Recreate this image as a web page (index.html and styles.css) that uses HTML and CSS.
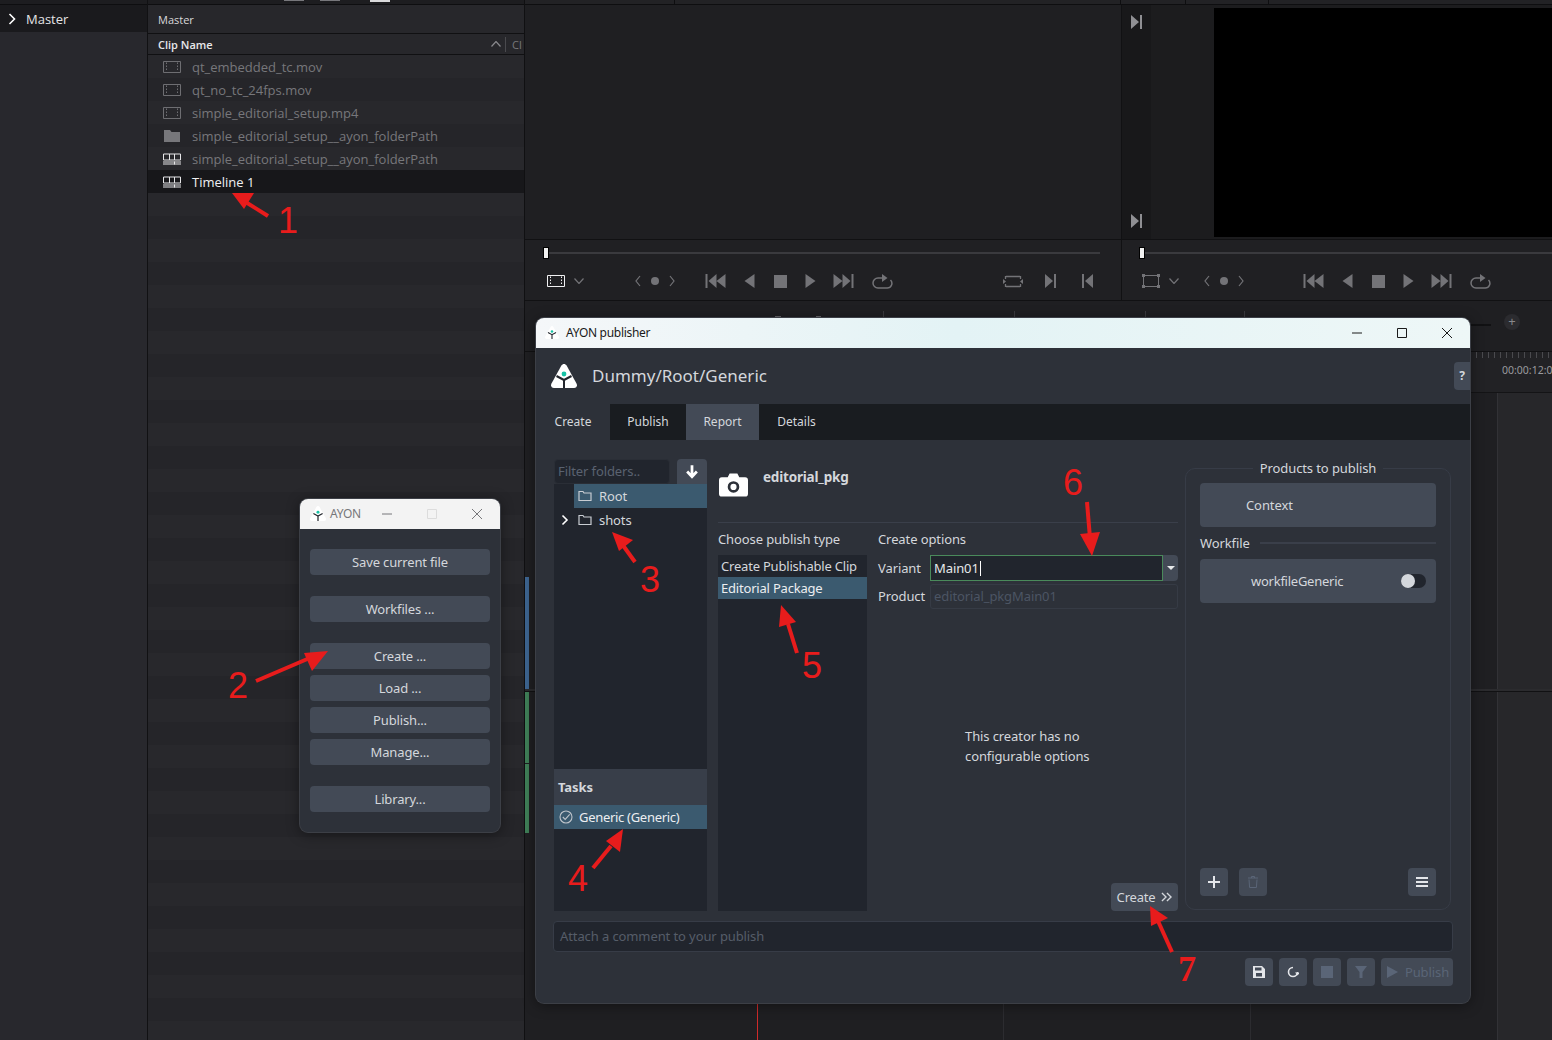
FILE: index.html
```html
<!DOCTYPE html>
<html lang="en">
    <head>
        <meta charset="UTF-8" />
        <title>AYON publisher</title>
        <link rel="stylesheet" href="styles.css">
    </head>
    <body>
        <!-- shared icons -->
        <svg class="sprite" aria-hidden="true">
            <symbol id="i-film" viewBox="0 0 18 12"><path d="M.5.500h17v11H.5z" fill="none" stroke="currentColor"/><path d="M3.500 1.500v9 M14.500 1.500v9" fill="none" stroke="currentColor" stroke-dasharray="1.500 1.500"/></symbol>
            <symbol id="i-tl" viewBox="0 0 18 11"><path d="M.5.500h17v6H.5z M6.500.5v6 M11.500.5v6 M0 8.500h18 M0 10.500h18 M11.500 8v3" fill="none" stroke="currentColor"/></symbol>
            <symbol id="i-folder" viewBox="0 0 14 12"><path d="M1 1.500h4l1 1.500h7v7.500H1z" fill="none" stroke="currentColor" stroke-width="1.200"/></symbol>
            <symbol id="i-first" viewBox="0 0 20 14"><path d="M0 0h2v14H0zM11 0v14L3 7zM20 0v14l-9-7z" fill="currentColor"/></symbol>
            <symbol id="i-last" viewBox="0 0 20 14"><path d="M20 0h-2v14h2zM9 0v14l8-7zM0 0v14l9-7z" fill="currentColor"/></symbol>
            <symbol id="i-back" viewBox="0 0 10 14"><path d="M10 0v14L0 7z" fill="currentColor"/></symbol>
            <symbol id="i-play" viewBox="0 0 10 14"><path d="M0 0v14l10-7z" fill="currentColor"/></symbol>
            <symbol id="i-stop" viewBox="0 0 13 13"><path d="M0 0h13v13H0z" fill="currentColor"/></symbol>
            <symbol id="i-loop" viewBox="0 0 21 16"><path d="M11 5H6a4.700 4.700 0 0 0 0 10h9a4.700 4.700 0 0 0 3.500-8" fill="none" stroke="currentColor" stroke-width="1.500"/><path d="M10 1l5.500 4-5.500 4z" fill="currentColor"/></symbol>
            <symbol id="i-mark-in" viewBox="0 0 11 14"><path d="M0 0h2v14H0zM11 0v14L3 7z" fill="currentColor"/></symbol>
            <symbol id="i-mark-out" viewBox="0 0 11 14"><path d="M11 0H9v14h2zM0 0v14l8-7z" fill="currentColor"/></symbol>
            <symbol id="i-nav" viewBox="0 0 40 12"><path d="M5 1 1 6l4 5M35 1l4 5-4 5" fill="none" stroke="currentColor" stroke-width="1.200"/><circle cx="20" cy="6" r="4" fill="currentColor"/></symbol>
            <symbol id="i-chev" viewBox="0 0 10 6"><path d="M.5.500 5 5.500 9.500.5" fill="none" stroke="currentColor" stroke-width="1.200"/></symbol>
            <symbol id="i-logo" viewBox="0 0 26 24"><path d="M13 0c1 0 2 .6 2.600 1.600L25.500 19.500c1.200 2.200 0 4.500-2.500 4.500H3C.5 24-.7 21.700.5 19.500L10.400 1.600C11 .6 12 0 13 0z" fill="#fff"/><path d="M5.500 12l7.500 4 7.500-4M13 16v8" fill="none" stroke="#23262d" stroke-width="2"/><circle cx="13" cy="10" r="2.400" fill="#17c3a6"/></symbol>
        </svg>

        <div class="app">
            <aside class="bins">
                <div class="topstrip"></div>
                <div class="binrow">
                    <svg class="binchev" viewBox="0 0 8 12"><path d="M1.500 1 6.500 6l-5 5" fill="none" stroke="#fff" stroke-width="1.600"/></svg>
                    Master
                </div>
            </aside>

            <section class="pool">
                <div class="topstrip poolstrip"></div>
                <div class="poolhead">Master</div>
                <div class="colhead">
                    <span class="colname">Clip Name</span>
                    <svg class="colsort" viewBox="0 0 10 6"><path d="M.5 5.500 5 .5l4.500 5" fill="none" stroke="#8a8a8e" stroke-width="1.200"/></svg>
                    <span class="colnext">Cl</span>
                </div>
                <div class="clips">
                    <div class="clip"><svg class="clipico dim"><use href="#i-film"/></svg>qt_embedded_tc.mov</div>
                    <div class="clip"><svg class="clipico dim"><use href="#i-film"/></svg>qt_no_tc_24fps.mov</div>
                    <div class="clip"><svg class="clipico dim"><use href="#i-film"/></svg>simple_editorial_setup.mp4</div>
                    <div class="clip"><svg class="clipico folderfill" viewBox="0 0 16 12"><path d="M0 0h6l1.500 2H16v10H0z" fill="currentColor"/></svg>simple_editorial_setup__ayon_folderPath</div>
                    <div class="clip"><svg class="clipico"><use href="#i-tl"/></svg>simple_editorial_setup__ayon_folderPath</div>
                    <div class="clip on"><svg class="clipico"><use href="#i-tl"/></svg>Timeline 1</div>
                </div>
            </section>

            <main class="stage">
                <div class="topstrip stagestrip"></div>
                <div class="viewers">
                    <div class="viewer left">
                        <div class="pic"></div>
                        <div class="scrub"><i class="knob"></i><i class="track"></i></div>
                        <div class="ctrl">
                            <svg class="ic film w"><use href="#i-film"/></svg>
                            <svg class="ic chev"><use href="#i-chev"/></svg>
                            <svg class="ic nav"><use href="#i-nav"/></svg>
                            <svg class="ic first t1"><use href="#i-first"/></svg>
                            <svg class="ic one"><use href="#i-back"/></svg>
                            <svg class="ic stop"><use href="#i-stop"/></svg>
                            <svg class="ic one"><use href="#i-play"/></svg>
                            <svg class="ic first"><use href="#i-last"/></svg>
                            <svg class="ic loop"><use href="#i-loop"/></svg>
                            <svg class="ic match" viewBox="0 0 20 13"><path d="M3 1.500h14M3 11.500h14M2.500 1v3M17.500 1v3M2.500 9v3M17.500 9v3" fill="none" stroke="currentColor" stroke-width="1.300"/><path d="M0 4l3 2.500L0 9zM20 4l-3 2.500L20 9z" fill="currentColor"/></svg>
                            <svg class="ic mark m1"><use href="#i-mark-out"/></svg>
                            <svg class="ic mark m2"><use href="#i-mark-in"/></svg>
                        </div>
                    </div>
                    <div class="viewer right">
                        <div class="pic">
                            <div class="marks">
                                <svg class="ic mark"><use href="#i-mark-out"/></svg>
                                <svg class="ic mark"><use href="#i-mark-out"/></svg>
                            </div>
                            <div class="black"></div>
                        </div>
                        <div class="scrub"><i class="knob"></i><i class="track"></i></div>
                        <div class="ctrl">
                            <svg class="ic frame" viewBox="0 0 18 14"><path d="M1.500 1.500h15v11h-15z" fill="none" stroke="currentColor"/><path d="M0 0h3v3H0zM15 0h3v3h-3zM0 11h3v3H0zM15 11h3v3h-3z" fill="currentColor"/></svg>
                            <svg class="ic chev"><use href="#i-chev"/></svg>
                            <svg class="ic nav r1"><use href="#i-nav"/></svg>
                            <svg class="ic first r2"><use href="#i-first"/></svg>
                            <svg class="ic one"><use href="#i-back"/></svg>
                            <svg class="ic stop"><use href="#i-stop"/></svg>
                            <svg class="ic one"><use href="#i-play"/></svg>
                            <svg class="ic first"><use href="#i-last"/></svg>
                            <svg class="ic loop"><use href="#i-loop"/></svg>
                        </div>
                    </div>
                </div>
                <div class="tools"></div>
                <div class="timeline">
                    <div class="tracks"></div>
                    <div class="ruler"></div>
                    <span class="tc">00:00:12:0</span>
                    <i class="zoomplus">+</i>
                    <i class="slider"></i>
                    <i class="track-b"></i>
                    <i class="track-g g1"></i>
                    <i class="track-g g2"></i>
                    <i class="split"></i>
                    <i class="vline v1"></i>
                    <i class="vline v3"></i>
                    <i class="playhead"></i>
                </div>
            </main>
        </div>

        <!-- 작은 AYON 창 -->
        <div class="win tray">
            <div class="titlebar gray">
                <svg class="winlogo"><use href="#i-logo"/></svg>
                <span class="wintitle">AYON</span>
                <span class="winbtns">
                    <svg viewBox="0 0 10 10"><path d="M0 5h10" stroke="currentColor"/></svg>
                    <svg class="off" viewBox="0 0 10 10"><path d="M.5.500h9v9h-9z" fill="none" stroke="currentColor"/></svg>
                    <svg viewBox="0 0 10 10"><path d="M0 0l10 10M10 0 0 10" stroke="currentColor"/></svg>
                </span>
            </div>
            <div class="traybody">
                <button class="tbtn gap">Save current file</button>
                <button class="tbtn gap">Workfiles ...</button>
                <button class="tbtn">Create ...</button>
                <button class="tbtn">Load ...</button>
                <button class="tbtn">Publish...</button>
                <button class="tbtn gap">Manage...</button>
                <button class="tbtn">Library...</button>
            </div>
        </div>

        <!-- publisher 창 -->
        <div class="win pub">
            <div class="titlebar">
                <svg class="winlogo small"><use href="#i-logo"/></svg>
                <span class="wintitle">AYON publisher</span>
                <span class="winbtns">
                    <svg viewBox="0 0 10 10"><path d="M0 5h10" stroke="currentColor"/></svg>
                    <svg viewBox="0 0 10 10"><path d="M.5.500h9v9h-9z" fill="none" stroke="currentColor"/></svg>
                    <svg viewBox="0 0 10 10"><path d="M0 0l10 10M10 0 0 10" stroke="currentColor"/></svg>
                </span>
            </div>
            <div class="pubhead">
                <svg class="publogo"><use href="#i-logo"/></svg>
                <span class="ctxpath">Dummy/Root/Generic</span>
                <span class="help">?</span>
            </div>
            <div class="tabs">
                <span class="tab sel">Create</span>
                <span class="tab t-pub">Publish</span>
                <span class="tab hl">Report</span>
                <span class="tab t-det">Details</span>
            </div>
            <div class="pubbody">
                <div class="colfolders">
                    <div class="filter">
                        <span class="filterin">Filter folders..</span>
                        <span class="sbtn arrowbtn"><svg viewBox="0 0 12 13"><path d="M6 1v9M1.800 6.500 6 11l4.200-4.500" fill="none" stroke="#fff" stroke-width="2.400"/></svg></span>
                    </div>
                    <div class="tree">
                        <div class="node on"><svg class="fold"><use href="#i-folder"/></svg>Root</div>
                        <div class="node kid">
                            <svg class="nodechev" viewBox="0 0 8 12"><path d="M1.500 1.500 6 6l-4.500 4.500" fill="none" stroke="#fff" stroke-width="1.600"/></svg>
                            <svg class="fold"><use href="#i-folder"/></svg>shots
                        </div>
                    </div>
                    <div class="taskhead">Tasks</div>
                    <div class="tasks">
                        <div class="task"><svg class="taskico" viewBox="0 0 14 14"><circle cx="7" cy="7" r="6" fill="none" stroke="currentColor" stroke-width="1.100"/><path d="M3.800 7l2.400 2.400 4.500-5" fill="none" stroke="currentColor" stroke-width="1.100"/></svg>Generic (Generic)</div>
                    </div>
                </div>

                <div class="colcreate">
                    <div class="crhead">
                        <svg class="cam" viewBox="0 0 30 24"><path fill-rule="evenodd" d="M3 4h6l2-4h8l2 4h6a3 3 0 0 1 3 3v14a3 3 0 0 1-3 3H3a3 3 0 0 1-3-3V7a3 3 0 0 1 3-3zm12 4a6 6 0 1 0 0 12 6 6 0 0 0 0-12zm0 2.800a3.200 3.200 0 1 1 0 6.400 3.200 3.200 0 0 1 0-6.400z" fill="#fff"/></svg>
                        <b class="crname">editorial_pkg</b>
                    </div>
                    <div class="crcols">
                        <div class="types">
                            <div class="lbl">Choose publish type</div>
                            <div class="typelist">
                                <div class="type">Create Publishable Clip</div>
                                <div class="type on">Editorial Package</div>
                            </div>
                        </div>
                        <div class="opts">
                            <div class="lbl">Create options</div>
                            <div class="field">
                                <span class="flabel">Variant</span>
                                <span class="varbox"><span class="varin">Main01<i class="caret"></i></span><span class="vardrop"><i></i></span></span>
                            </div>
                            <div class="field">
                                <span class="flabel">Product</span>
                                <span class="prodbox">editorial_pkgMain01</span>
                            </div>
                            <div class="nocfg">This creator has no<br>configurable options</div>
                            <div class="crfoot">
                                <span class="crbtn">Create
                                    <svg viewBox="0 0 12 11"><path d="M1 1l4.500 4.500L1 10M6.500 1 11 5.500 6.500 10" fill="none" stroke="currentColor" stroke-width="1.500"/></svg>
                                </span>
                            </div>
                        </div>
                    </div>
                </div>

                <div class="colprod">
                    <div class="prodtitle"><span>Products to publish</span></div>
                    <div class="card ctxcard">Context</div>
                    <div class="group"><span>Workfile</span><i></i></div>
                    <div class="card wfcard"><span>workfileGeneric</span><i class="toggle"></i></div>
                    <div class="prodfoot">
                        <span class="sbtn"><svg viewBox="0 0 12 12"><path d="M6 0v12M0 6h12" stroke="#e4e6ea" stroke-width="2"/></svg></span>
                        <span class="sbtn"><svg viewBox="0 0 10 12"><path d="M0 2h10M3.500 2V.5h3V2M1 3.500l.6 8h6.800l.6-8" fill="none" stroke="#5a6577"/></svg></span>
                        <span class="sbtn last"><svg viewBox="0 0 12 11"><path d="M0 1.500h12M0 5.500h12M0 9.500h12" stroke="#e4e6ea" stroke-width="2.200"/></svg></span>
                    </div>
                </div>
            </div>
            <div class="comment">Attach a comment to your publish</div>
            <div class="actions">
                <span class="sbtn"><svg viewBox="0 0 12 12"><path fill-rule="evenodd" d="M0 0h9l3 3v9H0zM2 1.500v3h6.500v-3zM3 7v3.500h6V7z" fill="#e4e6ea"/></svg></span>
                <span class="sbtn"><svg viewBox="0 0 12 12"><path d="M10.500 6A4.500 4.500 0 1 1 6 1.500" fill="none" stroke="#e4e6ea" stroke-width="1.600"/><path d="M8 6.500h5l-2.500 3z" fill="#e4e6ea"/></svg></span>
                <span class="sbtn"><svg viewBox="0 0 12 12"><path d="M0 0h12v12H0z" fill="#5a6577"/></svg></span>
                <span class="sbtn"><svg viewBox="0 0 12 12"><path d="M0 0h12L7.500 6v6h-3V6z" fill="#5a6577"/></svg></span>
                <span class="sbtn pubbtn"><svg viewBox="0 0 11 12"><path d="M0 0v12l11-6z" fill="#5a6577"/></svg>Publish</span>
            </div>
        </div>

        <!-- 빨간 화살표 주석 -->
        <svg class="arrows" viewBox="0 0 1552 1040">
            <g stroke="#e81c1c" stroke-width="4" fill="#e81c1c">
                <path d="M268 216 244 201" fill="none"/><path d="M232 193l22 0-10 16z" stroke="none"/>
                <path d="M256 681l56-24" fill="none"/><path d="M328 651l-16 20-8-18z" stroke="none"/>
                <path d="M635 562 622 544" fill="none"/><path d="M612 532l21 8-14 11z" stroke="none"/>
                <path d="M593 868l18-22" fill="none"/><path d="M623 829l-3 23-14-11z" stroke="none"/>
                <path d="M797 653 788 624" fill="none"/><path d="M781 605l15 17-17 5z" stroke="none"/>
                <path d="M1087 502l3 36" fill="none"/><path d="M1092 556l-12-22 20-2z" stroke="none"/>
                <path d="M1172 952l-14-31" fill="none"/><path d="M1150 906l18 12-17 8z" stroke="none"/>
            </g>
        </svg>
        <span class="num n1">1</span>
        <span class="num n2">2</span>
        <span class="num n3">3</span>
        <span class="num n4">4</span>
        <span class="num n5">5</span>
        <span class="num n6">6</span>
        <span class="num n7">7</span>
    </body>
</html>
```

FILE: styles.css
```css
/* 공통 */
html,
body {
    margin: 0;
    padding: 0;
}
body {
    position: relative;
    width: 1552px;
    height: 1040px;
    overflow: hidden;
    background: #1f1f22;
    font-family: "Noto Sans", sans-serif;
    font-size: 13px;
    letter-spacing: -.1px;
    color: #d4d7dc;
}
.sprite {
    display: none;
}

/* 뒤쪽 편집 프로그램 */
.app {
    display: grid;
    grid-template-columns: 148px 377px 1fr;
    height: 1040px;
}
.topstrip {
    height: 4px;
    background: #1d1d20;
    border-bottom: 1px solid #0e0e10;
}
.poolstrip {
    background:
        linear-gradient(#d8d8da, #d8d8da) 222px 0 / 20px 2px no-repeat,
        linear-gradient(#77777b, #77777b) 172px 0 / 20px 1px no-repeat,
        linear-gradient(#77777b, #77777b) 136px 0 / 20px 1px no-repeat,
        #1d1d20;
}
.stagestrip {
    background:
        linear-gradient(#0e0e10, #0e0e10) 149px 0 / 1px 4px no-repeat,
        linear-gradient(#0e0e10, #0e0e10) 595px 0 / 1px 4px no-repeat,
        linear-gradient(#0e0e10, #0e0e10) 660px 0 / 1px 4px no-repeat,
        linear-gradient(#0e0e10, #0e0e10) 743px 0 / 1px 4px no-repeat,
        #222225;
}
.bins {
    background: #28282d;
    border-right: 1px solid #111113;
    box-sizing: border-box;
}
.binrow {
    display: flex;
    align-items: center;
    height: 27px;
    padding-left: 8px;
    background: #1a1a1d;
    color: #e4e4e6;
    font-family: "Open Sans", sans-serif;
    letter-spacing: 0;
}
.binchev {
    width: 8px;
    height: 12px;
    margin-right: 10px;
}
.pool {
    display: flex;
    flex-direction: column;
    border-right: 1px solid #101012;
    background: #27272b;
    font-family: "Open Sans", sans-serif;
    letter-spacing: 0;
}
.poolhead {
    height: 28px;
    padding-left: 10px;
    line-height: 30px;
    font-size: 11px;
    color: #d8d8da;
    background: #27272b;
    border-bottom: 1px solid #101012;
}
.colhead {
    display: flex;
    align-items: center;
    height: 20px;
    padding-left: 10px;
    font-size: 11px;
    font-weight: 600;
    color: #e8e8ea;
    border-bottom: 1px solid #101012;
}
.colname {
    flex: 1;
}
.colsort {
    width: 10px;
    height: 6px;
    margin-right: 4px;
}
.colnext {
    width: 12px;
    padding-left: 6px;
    overflow: hidden;
    border-left: 1px solid #4a4a4e;
    color: #77777b;
    font-weight: 400;
}
.clips {
    flex: 1;
    background: repeating-linear-gradient(#28282c 0, #28282c 23px, #252529 23px, #252529 46px);
}
.clip {
    display: flex;
    align-items: center;
    height: 23px;
    font-size: 13px;
    color: #77777b;
}
.clip.on {
    background: #17171a;
    color: #f0f0f2;
}
.clipico {
    width: 18px;
    height: 12px;
    margin: 0 11px 0 15px;
    color: #e6e6e8;
}
.clipico.dim {
    color: #6e6e72;
}
.clipico.folderfill {
    color: #77777b;
}

/* 뷰어 */
.stage {
    display: flex;
    flex-direction: column;
    min-width: 0;
}
.viewers {
    display: grid;
    grid-template-columns: 596px 1fr;
    height: 295px;
    border-bottom: 1px solid #111113;
}
.viewer {
    display: flex;
    flex-direction: column;
    background: #202023;
}
.viewer.right {
    border-left: 1px solid #111113;
}
.pic {
    display: flex;
    height: 234px;
    background: #1f1f22;
    border-bottom: 1px solid #111113;
}
.viewer.right .pic {
    background: #1c1c1e;
}
.marks {
    display: flex;
    flex-direction: column;
    justify-content: space-between;
    align-items: center;
    width: 29px;
    padding: 10px 0 11px;
    box-sizing: border-box;
    background: #18181a;
    color: #8f8f93;
}
.black {
    flex: 1;
    margin: 3px 0 2px 63px;
    background: #000;
}
.scrub {
    display: flex;
    align-items: center;
    height: 26px;
    padding: 0 21px 0 18px;
}
.viewer.right .scrub {
    padding-left: 17px;
    padding-right: 0;
}
.knob {
    width: 4px;
    height: 10px;
    background: #f0f0f0;
    border: 1px solid #000;
    box-sizing: content-box;
}
.track {
    flex: 1;
    height: 2px;
    background: #3a3a3e;
}
.ctrl {
    display: flex;
    align-items: center;
    height: 30px;
    padding-left: 22px;
    color: #737377;
}
.viewer.right .ctrl {
    padding-left: 20px;
}
.ic {
    display: block;
    flex: none;
}
.film {
    width: 18px;
    height: 12px;
    color: #f0f0f2;
}
.chev {
    width: 10px;
    height: 6px;
    margin-left: 9px;
}
.nav {
    width: 40px;
    height: 12px;
    margin-left: 51px;
}
.first {
    width: 21px;
    height: 14px;
    margin-left: 17px;
}
.t1 {
    margin-left: 30px;
}
.one {
    width: 11px;
    height: 14px;
    margin-left: 18px;
}
.stop {
    width: 13px;
    height: 13px;
    margin-left: 19px;
}
.loop {
    width: 21px;
    height: 16px;
    margin-left: 18px;
}
.match {
    width: 20px;
    height: 13px;
    margin-left: 110px;
}
.mark {
    width: 11px;
    height: 14px;
}
.m1 {
    margin-left: 22px;
}
.m2 {
    margin-left: 26px;
}
.frame {
    width: 18px;
    height: 14px;
}
.r1 {
    margin-left: 25px;
}
.r2 {
    margin-left: 59px;
}
/* 툴바는 창에 가려서 아래쪽 조각만 보인다 */
.tools {
    height: 50px;
    background: #1f1f22;
    border-bottom: 1px solid #111113;
}
.tools::before {
    content: '';
    display: block;
    height: 8px;
    position: relative;
    top: 10px;
    background:
        linear-gradient(#3a3a3e, #3a3a3e) 358px 0 / 1px 8px no-repeat,
        linear-gradient(#3a3a3e, #3a3a3e) 489px 0 / 1px 8px no-repeat,
        linear-gradient(#3a3a3e, #3a3a3e) 620px 0 / 1px 8px no-repeat,
        linear-gradient(#3a3a3e, #3a3a3e) 719px 0 / 1px 8px no-repeat,
        linear-gradient(#3e3e42, #3e3e42) 731px 6px / 24px 2px no-repeat,
        linear-gradient(#3e3e42, #3e3e42) 770px 6px / 15px 2px no-repeat,
        linear-gradient(#3e3e42, #3e3e42) 810px 6px / 27px 2px no-repeat,
        linear-gradient(#66666a, #66666a) 250px 5px / 6px 3px no-repeat,
        linear-gradient(#66666a, #66666a) 291px 5px / 5px 3px no-repeat;
}

/* 타임라인 : 클립 위치가 곧 내용 */
.timeline {
    position: relative;
    flex: 1;
    background: #1f1f22;
}
.tracks {
    position: absolute;
    top: 40px;
    left: 972px;
    right: 0;
    bottom: 0;
    background: #27272a;
    border-left: 1px solid #323236;
}
.ruler {
    position: absolute;
    top: 0;
    right: 0;
    width: 82px;
    height: 40px;
    background: repeating-linear-gradient(90deg, #4a4a4e 0, #4a4a4e 1px, transparent 1px, transparent 6px) 0 0 / 100% 6px no-repeat, #222225;
    border-bottom: 1px solid #141416;
}
.tc {
    position: absolute;
    top: 11px;
    left: 977px;
    font-size: 10.500px;
    color: #9a9a9e;
    letter-spacing: 0;
    white-space: nowrap;
}
.zoomplus {
    position: absolute;
    top: -38px;
    left: 979px;
    width: 16px;
    height: 16px;
    border-radius: 50%;
    background: #2b2b2f;
    color: #88888c;
    font-style: normal;
    line-height: 15px;
    text-align: center;
}
.slider {
    position: absolute;
    top: -28px;
    left: 945px;
    width: 21px;
    height: 2px;
    background: #111113;
}
.track-b,
.track-g {
    position: absolute;
    left: 0;
    width: 4px;
}
.track-b {
    top: 225px;
    height: 112px;
    background: #3d6591;
}
.track-g {
    background: #3f7f58;
}
.g1 {
    top: 340px;
    height: 71px;
}
.g2 {
    top: 412px;
    height: 69px;
}
.split {
    position: absolute;
    top: 337px;
    left: 0;
    right: 0;
    height: 2px;
    background: #2b2b2e;
    border-bottom: 1px solid #111113;
}
.vline {
    position: absolute;
    top: 40px;
    bottom: 0;
    width: 1px;
    background: #2c2c30;
}
.v1 {
    left: 478px;
}
.v3 {
    left: 725px;
}
.playhead {
    position: absolute;
    top: 640px;
    bottom: 0;
    left: 232px;
    width: 1px;
    background: #d02a2a;
}

/* 창 공통 */
.win {
    position: absolute;
    display: flex;
    flex-direction: column;
    box-sizing: border-box;
    overflow: hidden;
    background: #2d3139;
    border-radius: 8px;
    box-shadow: 0 0 0 1px #3c3f46, 0 2px 14px rgba(0, 0, 0, .45);
}
.titlebar {
    display: flex;
    flex: none;
    align-items: center;
    height: 30px;
    padding-left: 10px;
    padding-bottom: 1px;
    box-sizing: border-box;
    background: linear-gradient(90deg, #f5f7f9, #e3f3f5 45%, #eef7f7);
    color: #1a1a1a;
    font-size: 12px;
}
.titlebar.gray {
    background: #f3f3f3;
    color: #77777a;
}
.winlogo {
    width: 16px;
    height: 15px;
}
.winlogo.small {
    width: 14px;
    height: 13px;
    margin-left: -1px;
}
.wintitle {
    margin-left: 7px;
    letter-spacing: -.3px;
}
.winbtns {
    display: flex;
    align-items: center;
    gap: 35px;
    margin-left: auto;
    padding-right: 18px;
}
.winbtns svg {
    width: 10px;
    height: 10px;
}

/* 작은 AYON 창 */
.tray {
    top: 499px;
    left: 300px;
    width: 200px;
    height: 333px;
}
.tray .wintitle {
    margin-left: 4px;
    font-size: 12px;
}
.tray .winbtns {
    gap: 35px;
    margin-left: auto;
    padding-right: 18px;
}
.tray .winbtns .off {
    color: #dcdcdc;
}
.traybody {
    display: flex;
    flex-direction: column;
    gap: 6px;
    padding: 20px 10px 0;
}
.tbtn {
    height: 26px;
    padding: 0;
    border: 0;
    border-radius: 4px;
    background: #434a56;
    color: #d4d7dc;
    font: 13px "Noto Sans", sans-serif;
    letter-spacing: -.15px;
}
.tbtn.gap {
    margin-bottom: 15px;
}

/* publisher 창 */
.pub {
    top: 318px;
    left: 536px;
    width: 934px;
    height: 685px;
}
.pubhead {
    position: relative;
    display: flex;
    flex: none;
    align-items: center;
    height: 56px;
    box-sizing: border-box;
    padding: 0 0 1px 15px;
}
.publogo {
    width: 26px;
    height: 24px;
}
.ctxpath {
    margin-left: 15px;
    font-size: 17px;
    letter-spacing: 0;
    color: #d4d7dc;
}
.help {
    position: absolute;
    top: 14px;
    right: 0;
    width: 16px;
    height: 28px;
    border-radius: 4px 0 0 4px;
    background: #434a56;
    font-size: 12px;
    font-weight: 700;
    line-height: 28px;
    text-align: center;
}
.tabs {
    display: flex;
    flex: none;
    height: 36px;
    background: #191c20;
}
.tab {
    width: 74px;
    line-height: 35px;
    font-size: 12px;
    letter-spacing: 0;
    text-align: center;
}
.t-pub {
    width: 76px;
}
.t-det {
    width: 75px;
}
.tab.sel {
    background: #2d3139;
}
.tab.hl {
    width: 73px;
    background: #434a56;
}
.pubbody {
    display: flex;
    flex: none;
    height: 471px;
    padding: 0 18px;
}
.colfolders {
    display: flex;
    flex-direction: column;
    width: 153px;
    padding-top: 19px;
    margin-right: 11px;
}
.filter {
    display: flex;
    flex: none;
    justify-content: space-between;
    height: 25px;
}
.filterin {
    width: 116px;
    box-sizing: border-box;
    padding-left: 3px;
    border: 1px solid #2a2e36;
    border-radius: 4px;
    background: #21252d;
    color: #5a6270;
    line-height: 22px;
}
.sbtn {
    display: flex;
    align-items: center;
    justify-content: center;
    width: 28px;
    height: 28px;
    border-radius: 4px;
    background: #434a56;
}
.sbtn svg {
    width: 12px;
    height: 12px;
}
.arrowbtn {
    width: 30px;
    height: 25px;
    border-radius: 4px 4px 0 0;
}
.arrowbtn svg {
    width: 14px;
    height: 15px;
}
.tree {
    flex: none;
    height: 285px;
    background: #21252d;
}
.node {
    display: flex;
    align-items: center;
    height: 24px;
    padding-left: 25px;
}
.node.on {
    margin-left: 20px;
    padding-left: 4px;
    background: #3b5a6f;
}
.node.kid {
    padding-left: 7px;
}
.nodechev {
    width: 8px;
    height: 12px;
    margin-right: 9px;
}
.fold {
    width: 14px;
    height: 12px;
    margin-right: 7px;
    color: #c9cdd3;
}
.taskhead {
    flex: none;
    height: 36px;
    padding-left: 4px;
    background: #383e49;
    font-size: 13px;
    font-weight: 700;
    line-height: 36px;
}
.tasks {
    flex: 1;
    background: #21252d;
}
.task {
    display: flex;
    align-items: center;
    height: 24px;
    padding-left: 5px;
    background: #3b5a6f;
    color: #eceef1;
    letter-spacing: -.3px;
}
.taskico {
    width: 14px;
    height: 14px;
    margin-right: 6px;
    color: #bfc4ca;
}
.colcreate {
    display: flex;
    flex-direction: column;
    width: 460px;
    margin-right: 7px;
}
.crhead {
    display: flex;
    flex: none;
    box-sizing: border-box;
    height: 83px;
    padding-top: 33px;
    padding-left: 1px;
    border-bottom: 1px solid #3a3f4a;
}
.cam {
    width: 29px;
    height: 24px;
}
.crname {
    margin: -6px 0 0 15px;
    font-size: 13.500px;
    letter-spacing: -.2px;
    line-height: 20px;
}
.crcols {
    display: flex;
    flex: 1;
}
.types {
    display: flex;
    flex-direction: column;
    width: 149px;
    margin-right: 11px;
}
.lbl {
    flex: none;
    height: 32px;
    line-height: 33px;
}
.typelist {
    flex: 1;
    background: #21252d;
}
.type {
    height: 22px;
    padding-left: 3px;
    line-height: 22px;
    color: #d4d7dc;
    letter-spacing: -.2px;
}
.type.on {
    background: #3b5a6f;
    color: #eceef1;
}
.opts {
    display: flex;
    flex: 1;
    flex-direction: column;
}
.field {
    display: flex;
    align-items: center;
    flex: none;
    height: 26px;
    margin-bottom: 2px;
}
.flabel {
    width: 52px;
}
.varbox {
    display: flex;
    flex: 1;
    height: 26px;
}
.varin {
    flex: 1;
    box-sizing: border-box;
    padding-left: 3px;
    border: 1px solid #4a8a5b;
    background: #21252d;
    color: #e6e8ea;
    line-height: 24px;
}
.caret {
    display: inline-block;
    width: 1px;
    height: 15px;
    margin-left: 1px;
    background: #fff;
    vertical-align: -3px;
}
.vardrop {
    display: flex;
    align-items: center;
    justify-content: center;
    width: 15px;
    border-radius: 0 4px 4px 0;
    background: #434a56;
}
.vardrop i {
    border-top: 4px solid #e6e8ea;
    border-left: 4px solid transparent;
    border-right: 4px solid transparent;
}
.prodbox {
    flex: 1;
    box-sizing: border-box;
    height: 25px;
    padding-left: 3px;
    border: 1px solid #363b45;
    border-radius: 3px;
    color: #4c5564;
    line-height: 23px;
}
.nocfg {
    flex: none;
    margin: 115px 0 0 87px;
    line-height: 20px;
}
.crfoot {
    display: flex;
    flex: 1;
    align-items: flex-end;
    justify-content: flex-end;
}
.crbtn {
    display: flex;
    align-items: center;
    justify-content: center;
    gap: 6px;
    width: 67px;
    height: 28px;
    border-radius: 4px;
    background: #434a56;
    font-size: 13px;
    letter-spacing: -.2px;
}
.crbtn svg {
    width: 11px;
    height: 10px;
}
.colprod {
    display: flex;
    flex-direction: column;
    width: 266px;
    height: 442px;
    box-sizing: border-box;
    margin-top: 28px;
    padding: 0 14px 13px;
    border: 1px solid #373c47;
    border-radius: 10px;
}
.prodtitle {
    height: 14px;
    margin-top: -10px;
    margin-bottom: 1px;
    text-align: center;
}
.prodtitle span {
    padding: 0 7px;
    background: #2d3139;
}
.card {
    display: flex;
    align-items: center;
    flex: none;
    height: 44px;
    border-radius: 4px;
    background: #434a56;
}
.ctxcard {
    margin-top: 9px;
    padding-left: 46px;
}
.group {
    display: flex;
    align-items: center;
    flex: none;
    gap: 10px;
    height: 32px;
}
.group i {
    flex: 1;
    height: 2px;
    background: #3a3f4a;
}
.wfcard {
    justify-content: space-between;
    padding: 0 10px 0 51px;
    letter-spacing: -.25px;
}
.toggle {
    position: relative;
    width: 25px;
    height: 14px;
    border-radius: 7px;
    background: #21252d;
}
.toggle::before {
    content: '';
    position: absolute;
    top: 0;
    left: 0;
    width: 14px;
    height: 14px;
    border-radius: 50%;
    background: #d4d7dc;
}
.prodfoot {
    display: flex;
    gap: 11px;
    margin-top: auto;
}
.prodfoot .last {
    margin-left: auto;
}
.comment {
    flex: none;
    box-sizing: border-box;
    height: 31px;
    margin: 10px 17px 0;
    padding-left: 6px;
    border: 1px solid #373c47;
    border-radius: 4px;
    background: #21252d;
    color: #565d69;
    line-height: 29px;
}
.actions {
    display: flex;
    flex: none;
    justify-content: flex-end;
    gap: 6px;
    margin-top: 6px;
    padding-right: 17px;
}
.pubbtn {
    width: 72px;
    gap: 7px;
    padding-left: 2px;
    box-sizing: border-box;
    color: #5a6577;
}
.pubbtn svg {
    width: 11px;
    height: 12px;
}

/* 주석 화살표 */
.arrows {
    position: absolute;
    top: 0;
    left: 0;
    width: 1552px;
    height: 1040px;
    pointer-events: none;
}
.num {
    position: absolute;
    color: #e81c1c;
    font-family: "Liberation Sans", sans-serif;
    font-size: 36px;
    letter-spacing: 0;
    line-height: 36px;
}
.n1 { top: 203px; left: 278px; }
.n2 { top: 668px; left: 228px; }
.n3 { top: 562px; left: 640px; }
.n4 { top: 861px; left: 568px; }
.n5 { top: 648px; left: 802px; }
.n6 { top: 465px; left: 1063px; }
.n7 { top: 951px; left: 1178px; font-family: "Liberation Serif", serif; font-weight: 700; }
```
